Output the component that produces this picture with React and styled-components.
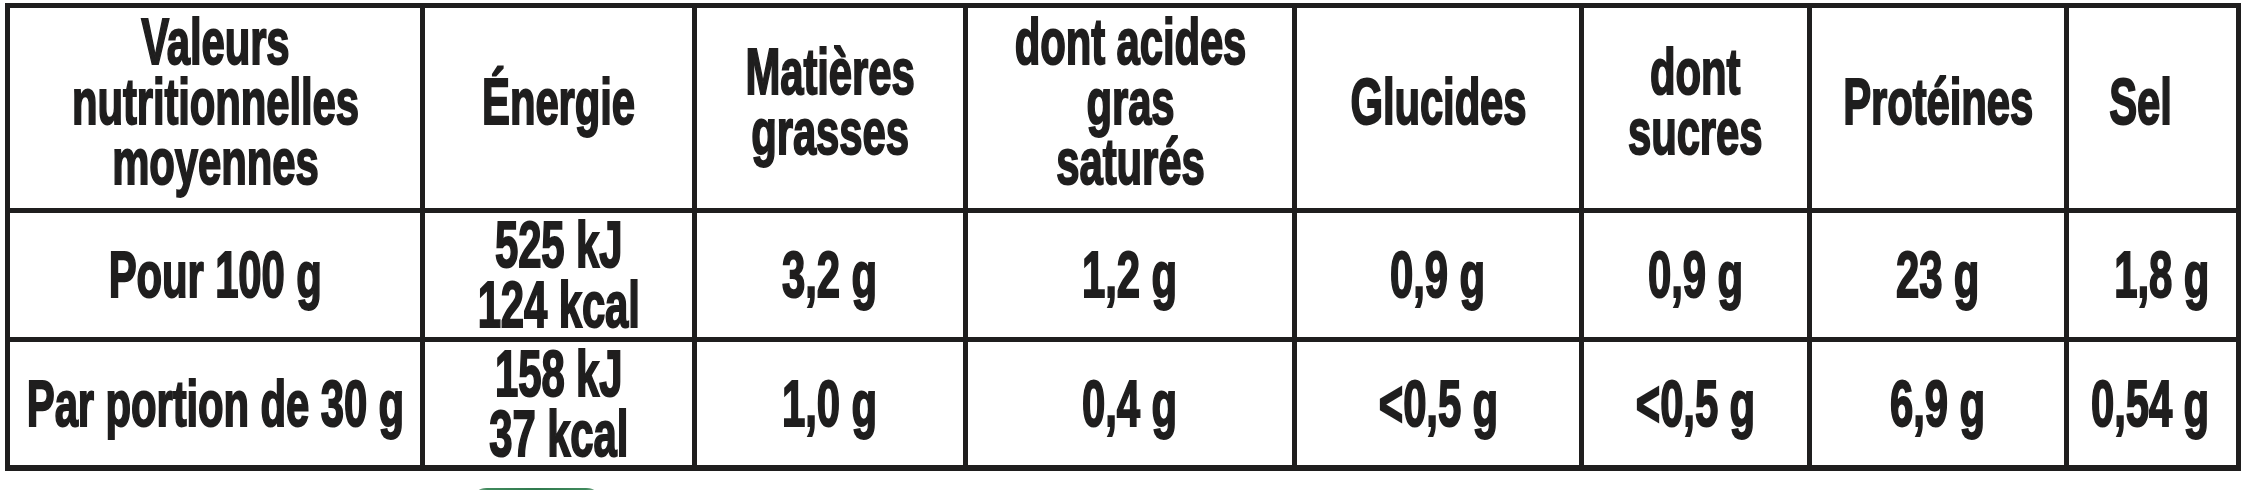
import React from "react";
import styled, { createGlobalStyle } from "styled-components";

const Global = createGlobalStyle`
  html, body {
    margin: 0;
    padding: 0;
    background: #ffffff;
    overflow: hidden;
  }
  body {
    font-family: "Liberation Sans", Arial, sans-serif;
    color: #1f1e1e;
  }
`;

const Page = styled.div`
  padding: 3px 0 0 5px;
`;

const Sheet = styled.div`
  display: grid;
  grid-template-columns: 410px 267px 266px 324px 282px 223px 252px 167px;
  grid-template-rows: 200px 124px 123px;
  gap: 5px;
  padding: 5px 5px 6px 5px;
  background: #1f1e1e;
  width: fit-content;
`;

const Cell = styled.div`
  background: #ffffff;
  display: flex;
  align-items: center;
  justify-content: ${(p) => (p.$align === "right" ? "flex-end" : "center")};
  text-align: center;
  padding-bottom: ${(p) => (p.$head ? "12px" : "0")};
  padding-right: ${(p) => p.$pr || 0}px;
  overflow: visible;
  min-width: 0;
`;

const Label = styled.span`
  display: inline-block;
  white-space: nowrap;
  font-family: "Liberation Sans", Arial, sans-serif;
  font-weight: 700;
  font-size: 65px;
  line-height: 60px;
  letter-spacing: -0.2px;
  color: #1f1e1e;
  -webkit-text-stroke: 2px #1f1e1e;
  transform: scaleX(0.645);
  transform-origin: ${(p) => (p.$align === "right" ? "right center" : "center center")};
`;

const Footer = styled.div`
  padding: 17px 0 0 467px;
`;

const Pill = styled.div`
  width: 129px;
  height: 30px;
  border-radius: 14px;
  background: linear-gradient(90deg, #9fb8a8 0%, #3f8a5c 12%, #2f7a4e 50%, #3f8a5c 88%, #9fb8a8 100%);
`;

const header = [
  ["Valeurs", "nutritionnelles", "moyennes"],
  ["Énergie"],
  ["Matières", "grasses"],
  ["dont acides", "gras", "saturés"],
  ["Glucides"],
  ["dont", "sucres"],
  ["Protéines"],
  ["Sel"],
];

const rows = [
  [["Pour 100 g"], ["525 kJ", "124 kcal"], ["3,2 g"], ["1,2 g"], ["0,9 g"], ["0,9 g"], ["23 g"], ["1,8 g"]],
  [["Par portion de 30 g"], ["158 kJ", "37 kcal"], ["1,0 g"], ["0,4 g"], ["<0,5 g"], ["<0,5 g"], ["6,9 g"], ["0,54 g"]],
];

function Lines({ lines, align }) {
  return (
    <Label $align={align}>
      {lines.map((l, i) => (
        <React.Fragment key={i}>
          {i > 0 && <br />}
          {l}
        </React.Fragment>
      ))}
    </Label>
  );
}

export default function App() {
  return (
    <>
      <Global />
      <Page>
        <Sheet>
          {header.map((lines, i) => (
            <Cell key={"h" + i} $head $pr={i === 7 ? 24 : 0}>
              <Lines lines={lines} />
            </Cell>
          ))}
          {rows.map((row, r) =>
            row.map((lines, i) => {
              const isSel = i === 7;
              return (
                <Cell key={r + "-" + i} $align={isSel ? "right" : "center"} $pr={isSel ? 27 : 0}>
                  <Lines lines={lines} align={isSel ? "right" : "center"} />
                </Cell>
              );
            })
          )}
        </Sheet>
        <Footer>
          <Pill />
        </Footer>
      </Page>
    </>
  );
}
